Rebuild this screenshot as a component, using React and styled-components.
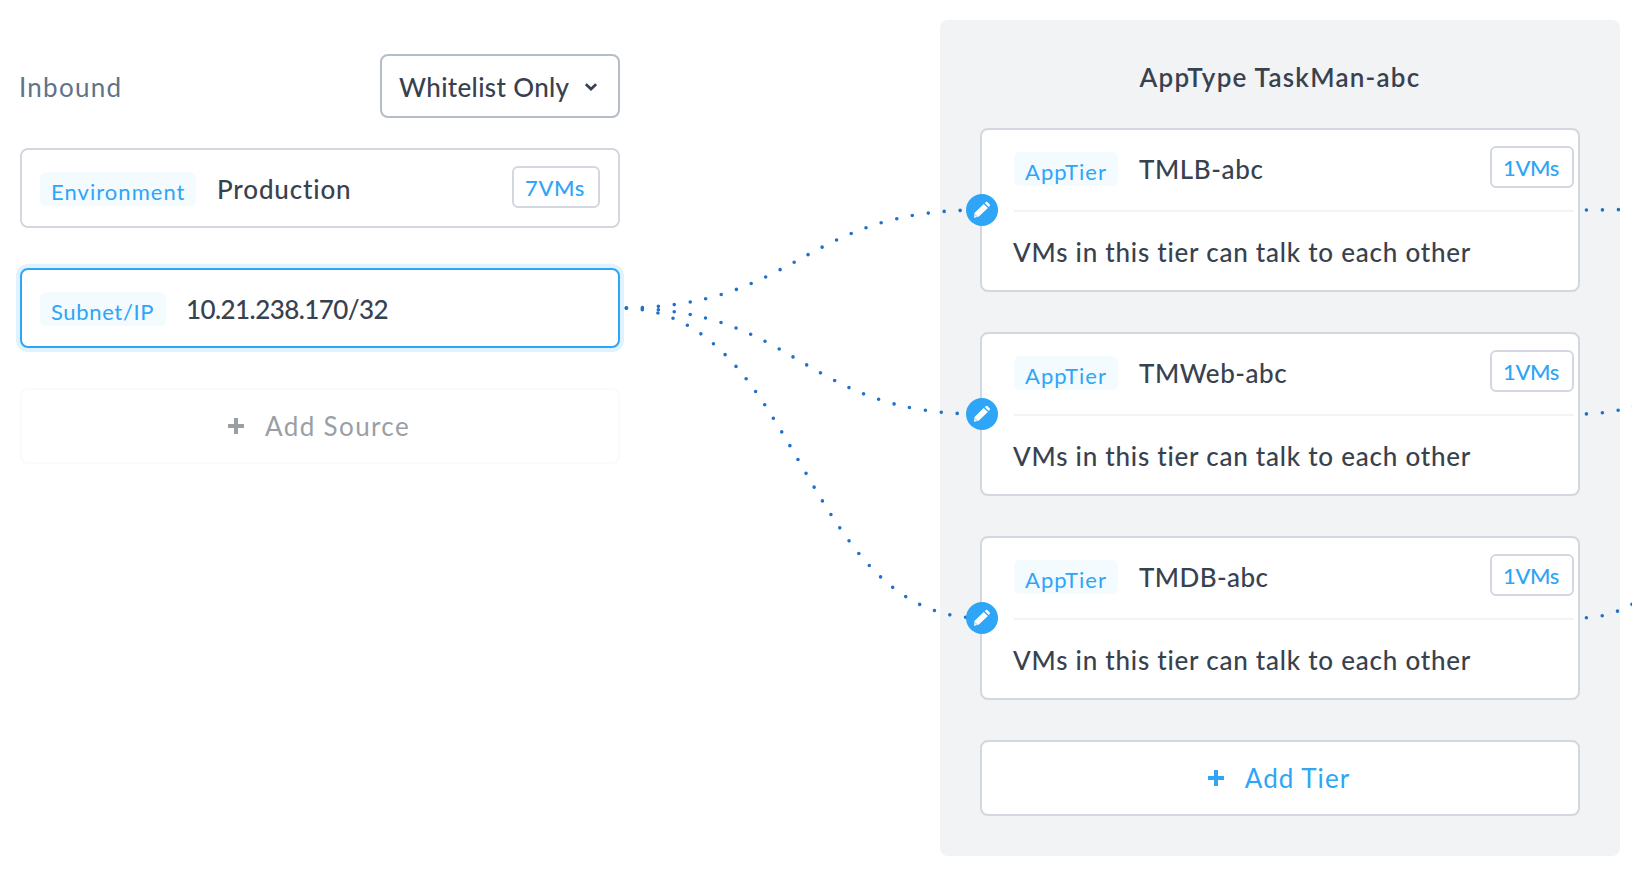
import React from 'react';
import styled, { createGlobalStyle, css } from 'styled-components';

const color = {
  ink: '#38424f',
  muted: '#627288',
  blue: '#2ea5f6',
  dot: '#2270c8',
  line: '#d3d7df',
  surface: '#f2f3f5',
  tag: '#f3fbff',
};

const GlobalStyle = createGlobalStyle`
  * { box-sizing: border-box; }
  body {
    margin: 0;
    background: #fff;
    font-family: Lato, 'Open Sans', sans-serif;
    font-size: 26px;
    line-height: 32px;
    color: ${color.ink};
    font-variant-ligatures: none;
  }
`;

const Page = styled.main`
  position: relative;
  display: flex;
  justify-content: space-between;
  align-items: flex-start;
  width: 1632px;
  height: 874px;
  padding: 20px 12px 0 20px;
  overflow: hidden;
  white-space: nowrap;
`;

const Inbound = styled.section`
  display: flex;
  flex-direction: column;
  width: 600px;
  padding-top: 34px;
`;

const InboundHeader = styled.header`
  display: flex;
  align-items: center;
  justify-content: space-between;
  margin-bottom: 30px;
`;

const Heading = styled.h2`
  margin: 0 0 0 -1px;
  padding-top: 1px;
  font-size: 26px;
  font-weight: 400;
  letter-spacing: 1.25px;
  color: ${color.muted};
`;

const Select = styled.button`
  display: flex;
  align-items: center;
  justify-content: space-between;
  width: 240px;
  height: 64px;
  padding: 1px 21px 0 17px;
  border: 2px solid #b6bdca;
  border-radius: 8px;
  background: #fff;
  color: inherit;
  font: inherit;
  font-weight: 500;
  letter-spacing: 0.35px;
`;

const cardFrame = css`
  border: 2px solid ${color.line};
  border-radius: 8px;
  background: #fff;
`;

const SourceCard = styled.article`
  ${cardFrame}
  display: flex;
  align-items: center;
  height: 80px;
  padding: 0 18px;
  margin-bottom: 40px;
  ${(p) => p.$selected && css`
    border-color: ${color.blue};
    box-shadow: 0 0 0 4px #dff2fe;
  `}
`;

const Tag = styled.span`
  width: ${(p) => p.$width}px;
  height: 34px;
  margin: 2px 20px 0 0;
  padding: 3px 0 0 11px;
  border-radius: 6px;
  background: ${color.tag};
  color: ${color.blue};
  font-size: 22px;
  line-height: 34px;
  letter-spacing: ${(p) => p.$spacing}px;
`;

const Name = styled.span`
  margin-left: ${(p) => p.$shift ?? 1}px;
  padding-top: 1px;
  font-weight: 500;
  letter-spacing: ${(p) => p.$spacing}px;
`;

const VmCount = styled.span`
  display: flex;
  align-items: center;
  justify-content: center;
  width: ${(p) => p.$width}px;
  height: 42px;
  margin: 0 0 2px auto;
  padding: 1px 2px 0 0;
  border: 2px solid ${color.line};
  border-radius: 6px;
  color: ${color.blue};
  font-size: 22px;
  font-weight: 500;
  letter-spacing: ${(p) => p.$spacing}px;
`;

const AddButton = styled.button`
  ${cardFrame}
  display: flex;
  align-items: center;
  justify-content: center;
  gap: 21px;
  width: 100%;
  height: 76px;
  padding: 0 2px 0 0;
  color: ${color.blue};
  font: inherit;
  letter-spacing: ${(p) => p.$spacing}px;
  ${(p) => p.$disabled && css`
    border-color: #fafafb;
    color: #9a9fa6;
  `}
`;

const Panel = styled.section`
  display: flex;
  flex-direction: column;
  width: 680px;
  height: 836px;
  padding: 41px 40px 0;
  border-radius: 8px;
  background: ${color.surface};
`;

const PanelTitle = styled.h1`
  margin: 0 0 35px;
  font-size: 26px;
  line-height: 32px;
  font-weight: 600;
  letter-spacing: 1.25px;
  text-align: center;
`;

const TierCard = styled.article`
  ${cardFrame}
  position: relative;
  height: 164px;
  padding: 0 4px 0 32px;
  margin-bottom: 40px;
`;

const TierHead = styled.div`
  display: flex;
  align-items: center;
  height: 82px;
  padding-bottom: 4px;
  border-bottom: 2px solid ${color.surface};
`;

const TierRule = styled.p`
  margin: 24px 0 0 -1px;
  font-weight: 500;
  letter-spacing: 0.77px;
`;

const EditButton = styled.button`
  position: absolute;
  z-index: 2;
  left: -16px;
  top: 64px;
  display: flex;
  align-items: center;
  justify-content: center;
  width: 32px;
  height: 32px;
  padding: 0;
  border: 0;
  border-radius: 50%;
  background: ${color.blue};
`;

const Connectors = styled.svg`
  position: absolute;
  z-index: 1;
  inset: 0;
  pointer-events: none;
  fill: none;
  stroke: ${color.dot};
  stroke-width: 3.6;
  stroke-linecap: round;
  stroke-dasharray: 0 16;
  stroke-dashoffset: -6.3;
`;

const PencilIcon = () => (
  <svg width="18" height="18" viewBox="0 0 18 18" fill="#fff">
    <path d="M10.7 2.9 14.9 7 5.6 15.8 1 16.8 1.5 12Z" />
    <path d="M11.7 2.1 13.1 1Q13.7 .6 14.3 1.1L16.8 3.5Q17.3 4.1 16.8 4.7L15.7 6Z" />
    <path d="M2.1 13.7 4 15.6" stroke={color.blue} strokeWidth=".8" />
  </svg>
);

const PlusIcon = () => (
  <svg width="16" height="16" viewBox="0 0 16 16" fill="currentColor">
    <path d="M6 0h4v6h6v4h-6v6H6v-6H0V6h6z" />
  </svg>
);

const ChevronIcon = () => (
  <svg width="12" height="8" viewBox="0 0 12 8" fill="none" stroke="currentColor" strokeWidth="2.8">
    <path d="M.8 1.2 6 6 11.2 1.2" />
  </svg>
);

const tiers = [
  { name: 'TMLB-abc', spacing: 0.6, y: 210 },
  { name: 'TMWeb-abc', spacing: 0.55, y: 414 },
  { name: 'TMDB-abc', spacing: 0.4, y: 618 },
];

const SOURCE_Y = 308;
const TARGET_Y = 188;

export default function App() {
  return (
    <Page>
      <GlobalStyle />
      <Inbound>
        <InboundHeader>
          <Heading>Inbound</Heading>
          <Select>
            Whitelist Only
            <ChevronIcon />
          </Select>
        </InboundHeader>
        <SourceCard>
          <Tag $width={156} $spacing={1.04}>Environment</Tag>
          <Name $spacing={0.85}>Production</Name>
          <VmCount $width={88} $spacing={0.6}>7VMs</VmCount>
        </SourceCard>
        <SourceCard $selected>
          <Tag $width={126} $spacing={0.65}>Subnet/IP</Tag>
          <Name $spacing={-0.57} $shift={0}>10.21.238.170/32</Name>
        </SourceCard>
        <AddButton $disabled $spacing={1.38}>
          <PlusIcon />
          Add Source
        </AddButton>
      </Inbound>
      <Panel>
        <PanelTitle>AppType TaskMan-abc</PanelTitle>
        {tiers.map((tier) => (
          <TierCard key={tier.name}>
            <TierHead>
              <Tag $width={104} $spacing={1.05}>AppTier</Tag>
              <Name $spacing={tier.spacing}>{tier.name}</Name>
              <VmCount $width={84} $spacing={-0.4}>1VMs</VmCount>
            </TierHead>
            <TierRule>VMs in this tier can talk to each other</TierRule>
            <EditButton aria-label="Edit connection">
              <PencilIcon />
            </EditButton>
          </TierCard>
        ))}
        <AddButton $spacing={1.05}>
          <PlusIcon />
          Add Tier
        </AddButton>
      </Panel>
      <Connectors width="1632" height="874">
        {tiers.map(({ name, y }) => (
          <React.Fragment key={name}>
            <path d={`M620 ${SOURCE_Y}C800 ${SOURCE_Y} 800 ${y} 980 ${y}`} />
            <path d={`M1580 ${y}C1760 ${y} 1760 ${TARGET_Y} 1940 ${TARGET_Y}`} />
          </React.Fragment>
        ))}
      </Connectors>
    </Page>
  );
}
